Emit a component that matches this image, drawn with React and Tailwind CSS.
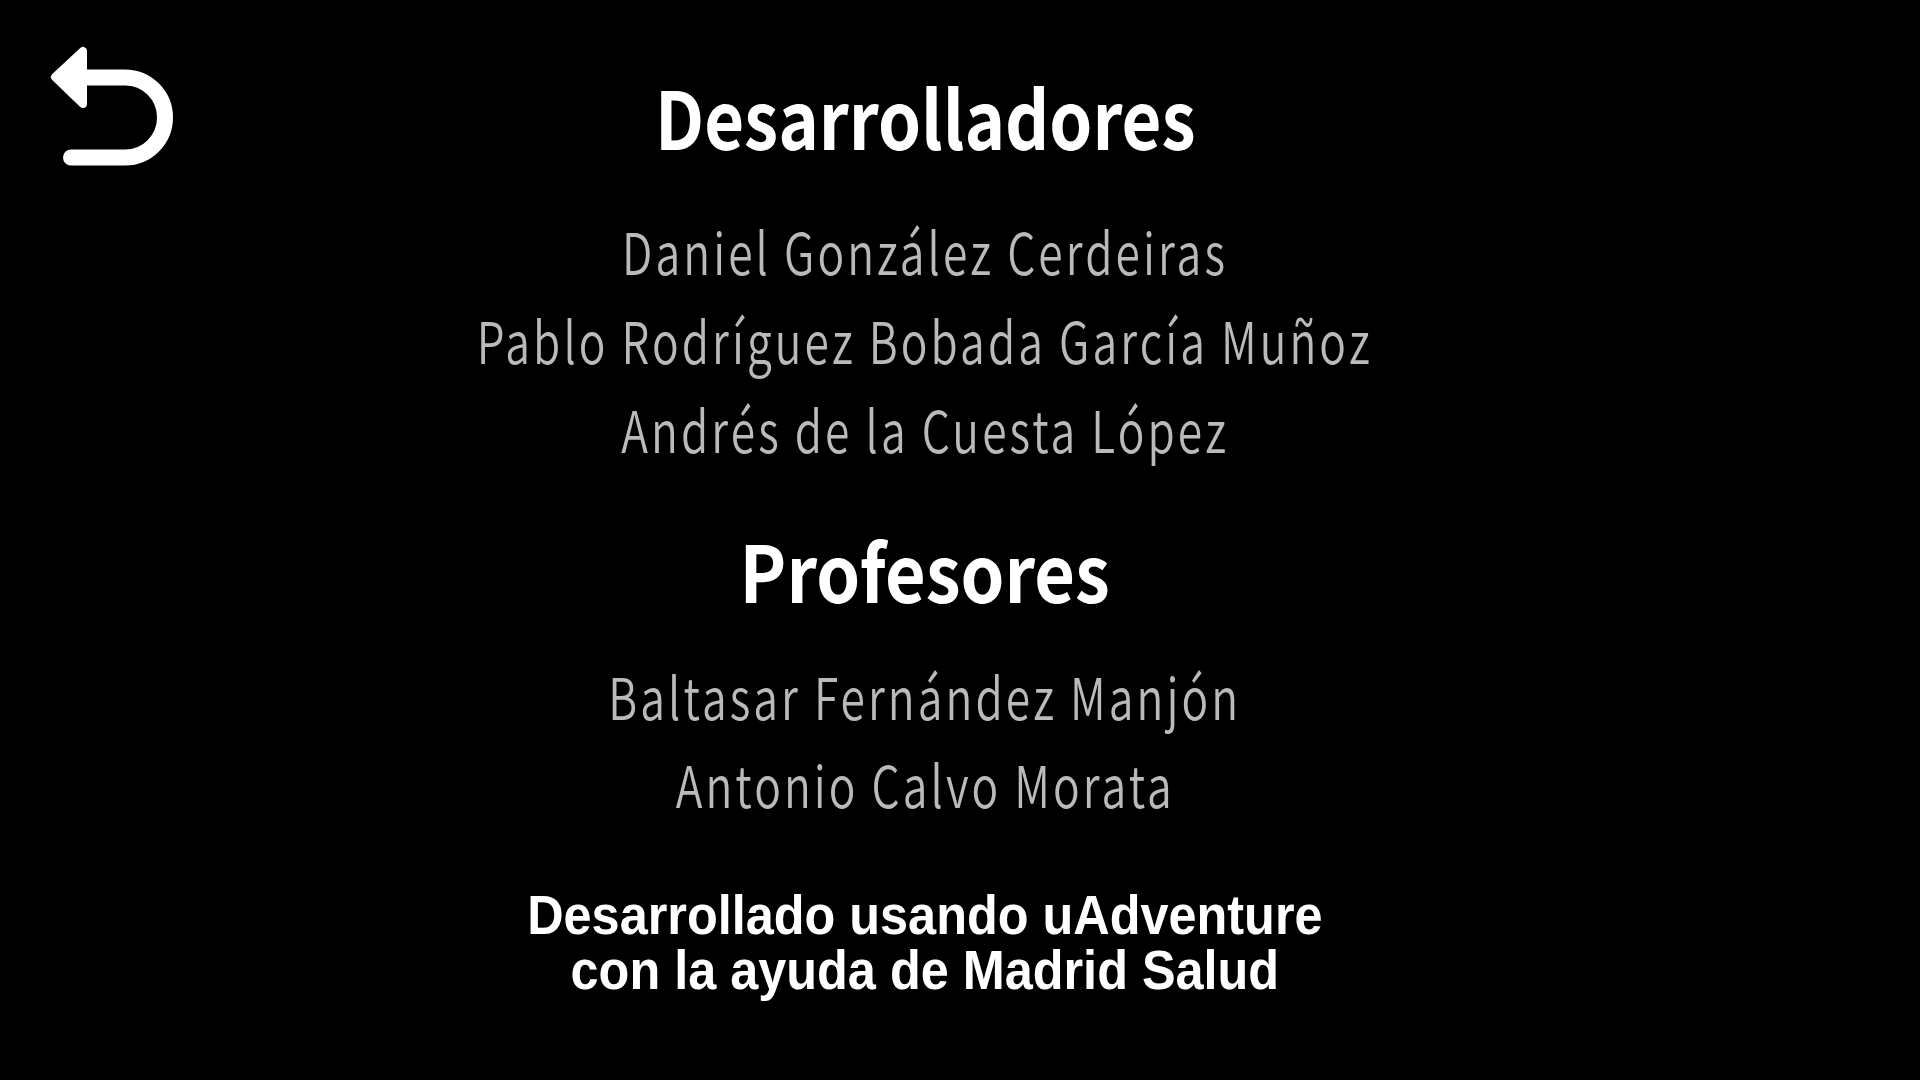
// Credits screen: developers, teachers and a footer note, with a back arrow in the corner.
import React from "react";

const developers = [
  "Daniel González Cerdeiras",
  "Pablo Rodríguez Bobada García Muñoz",
  "Andrés de la Cuesta López",
];

const teachers = ["Baltasar Fernández Manjón", "Antonio Calvo Morata"];

function BackIcon() {
  return (
    <svg width="130" height="130" viewBox="0 0 130 130" fill="none">
      <polygon
        points="10,37 38,11 38,64"
        fill="#fff"
        stroke="#fff"
        strokeWidth="8"
        strokeLinejoin="round"
      />
      <path
        d="M38 37.5 H80 A40 40 0 0 1 80 117.5 H26"
        stroke="#fff"
        strokeWidth="16"
        strokeLinecap="round"
        strokeLinejoin="round"
      />
    </svg>
  );
}

export default function App() {
  const heading = { fontFamily: '"Noto Sans CJK JP", "Noto Sans", sans-serif' };
  const names = { fontFamily: '"Noto Sans CJK JP", "Noto Sans", sans-serif' };
  const footer = { fontFamily: '"Liberation Sans", Arial, sans-serif' };

  return (
    <div className="relative w-[1920px] h-[1080px] bg-black overflow-hidden">
      <button className="absolute left-[45px] top-[40px]">
        <BackIcon />
      </button>

      <div className="flex flex-col items-center pr-[70px] text-center">
        <h1
          style={heading}
          className="mt-[75px] text-[80px] leading-[80px] font-bold text-white scale-x-[0.86]"
        >
          Desarrolladores
        </h1>
        <div className="mt-[51px] flex flex-col items-center">
          {developers.map((n) => (
            <p
              key={n}
              style={names}
              className="text-[58px] leading-[89px] font-[350] tracking-[4px] text-[#bababa] scale-x-[0.765]"
            >
              {n}
            </p>
          ))}
        </div>

        <h1
          style={heading}
          className="mt-[56px] text-[78px] leading-[80px] font-bold text-white scale-x-[0.9]"
        >
          Profesores
        </h1>
        <div className="mt-[42px] flex flex-col items-center">
          {teachers.map((n) => (
            <p
              key={n}
              style={names}
              className="text-[58px] leading-[88px] font-[350] tracking-[4px] text-[#bababa] scale-x-[0.765]"
            >
              {n}
            </p>
          ))}
        </div>

        <div
          style={footer}
          className="mt-[60px] text-[56px] leading-[55px] font-bold text-white"
        >
          <p className="scale-x-[0.9]">Desarrollado usando uAdventure</p>
          <p className="scale-x-[0.9]">con la ayuda de Madrid Salud</p>
        </div>
      </div>
    </div>
  );
}
